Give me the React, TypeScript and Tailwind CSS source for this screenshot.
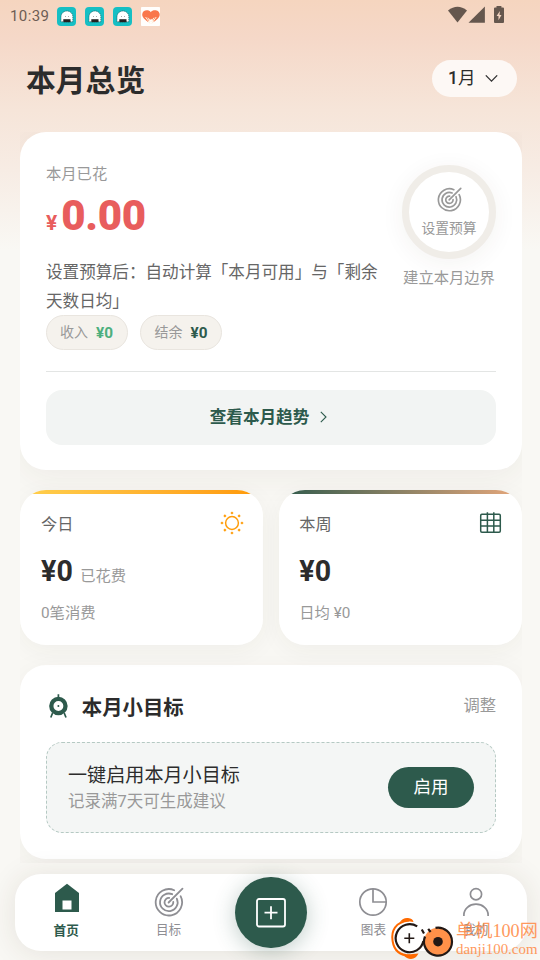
import React from "react";

function AppBadge() {
  return (
    <svg width="19" height="19" viewBox="0 0 19 19">
      <rect width="19" height="19" rx="4" fill="#16bfc4" />
      <path d="M4 14.8V9.6A5.9 5.6 0 0 1 15.8 9.6V14.8Z" fill="#fff" stroke="#1d3f44" strokeWidth="0.6" strokeDasharray="1.3 0.8" />
      <path d="M6.3 12.2H13.5V15.2H6.3Z" fill="#222" />
      <circle cx="8.4" cy="9.4" r="0.4" fill="#222" />
      <circle cx="11.4" cy="9.4" r="0.4" fill="#222" />
    </svg>
  );
}

function HeartBadge() {
  return (
    <svg width="19" height="19" viewBox="0 0 19 19">
      <rect width="19" height="19" rx="0.8" fill="#fffefc" />
      <path d="M9.8 5.3C7.8 2 1.2 2.8 1.2 7.6C1.2 10.7 4.5 13 7.2 15.2L8.8 11.4L9.8 13L11.1 11.4L12.6 15.2C15.5 13 18.7 10.7 18.7 7.6C18.7 2.8 11.8 2 9.8 5.3Z" fill="#f9774c" />
      <path d="M4.6 10L9 16.5M15.2 10L10.8 16.5M6.8 10.7L9.2 14.8M13 10.7L10.7 14.8" stroke="#fff0dc" strokeWidth="1" fill="none" />
    </svg>
  );
}

function Target({ size, color, width }: { size: number; color: string; width: number }) {
  return (
    <svg width={size} height={size} viewBox="0 0 30 30" fill="none" stroke={color} strokeWidth={width} strokeLinecap="round">
      <path d="M20.2 3.2A13.2 13.2 0 1 0 26.6 9.2" />
      <path d="M18.2 7.2A8.8 8.8 0 1 0 22.8 11.6" />
      <path d="M15.2 10.9A4.4 4.4 0 1 0 19.3 15" />
      <path d="M14.6 15.5L28.5 1.6" />
    </svg>
  );
}

function SunIcon() {
  const dots = ["12,2", "19.1,4.9", "22,12", "19.1,19.1", "12,22", "4.9,19.1", "2,12", "4.9,4.9"];
  return (
    <svg width="24" height="24" viewBox="0 0 24 24" fill="none">
      <circle cx="12" cy="12" r="6.4" stroke="#ff9d0a" strokeWidth="1.5" />
      {dots.map((d) => {
        const [x, y] = d.split(",").map(Number);
        return <path key={d} d={`M${x} ${y - 1.6}L${x + 1.6} ${y}L${x} ${y + 1.6}L${x - 1.6} ${y}Z`} fill="#ff9d0a" />;
      })}
    </svg>
  );
}

function SummaryCard({ title, bar, icon, unit, foot }: { title: string; bar: string; icon: React.ReactNode; unit?: string; foot: string }) {
  return (
    <section className="h-[155px] flex-1 rounded-[26px] shadow-[0_5px_24px_rgba(60,50,30,0.05)]">
      <div className="flex h-full flex-col overflow-hidden rounded-[26px] bg-white">
        <div className={`h-1 shrink-0 ${bar}`} />
        <div className={`flex flex-col pt-[17px] pr-[20.5px] ${unit ? "pl-[21px]" : "pl-[20.3px]"}`}>
          <div className="flex h-6 items-center justify-between">
            <span className="pt-[3px] text-[16.2px] leading-6 text-[#666]">{title}</span>
            <span className="-mr-[1px]">{icon}</span>
          </div>
          <div className="mt-[18px] flex h-9 items-baseline leading-9">
            <span className="text-[28.6px] font-bold tracking-[0.2px] text-[#2c2c2c]">¥0</span>
            {unit && <span className="ml-[7px] text-[15.3px] text-[#999]">{unit}</span>}
          </div>
          <div className="mt-[12px] text-[15.3px] leading-6 text-[#999]">{foot}</div>
        </div>
      </div>
    </section>
  );
}

function NavItem({ label, active, icon }: { label: string; active?: boolean; icon: React.ReactNode }) {
  return (
    <div className="flex flex-1 flex-col items-center">
      <div className={active ? "mt-[9px] ml-px h-[30px]" : "mt-[13px] h-[30px]"}>{icon}</div>
      <span className={active ? "mt-[9px] text-[12.6px] leading-[18px] font-bold text-[#2d5a4c]" : "mt-[4px] text-[12.6px] leading-[18px] text-[#8e8e93]"}>{label}</span>
    </div>
  );
}

export default function App() {
  return (
    <div
      className="relative flex h-[960px] w-[540px] flex-col overflow-hidden bg-[#f9f8f4] bg-[linear-gradient(180deg,#f5d5bf_0px,#f5d8c8_38px,#f6e5d9_110px,#f7ece4_170px,#f9f8f4_250px)]"
      style={{ fontFamily: 'Roboto, "Noto Sans CJK SC", sans-serif' }}
    >
      <div className="flex h-8 shrink-0 items-center justify-between pr-[36px] pl-[10px]">
        <div className="flex items-center">
          <span className="w-[47px] text-[15px] tracking-[0.4px] text-[#6d5d54]">10:39</span>
          <div className="flex gap-[9px]">
            <AppBadge />
            <AppBadge />
            <AppBadge />
            <HeartBadge />
          </div>
        </div>
        <svg width="56" height="18" viewBox="0 0 56 18" fill="#65574e" className="mt-[-2px]">
          <path d="M0 4.5Q9.5 -3 19 4.5L9.5 16.4Z" />
          <path d="M20.5 16.8L36.9 0.5V16.8Z" />
          <path d="M46 2.4Q46 1.4 47 1.4H48.5V0H53.4V1.4H55Q56 1.4 56 2.4V16Q56 17 55 17H47Q46 17 46 16Z" />
          <path d="M51.9 5L48.6 10.1H50.5V14.2L53.5 9H51.5Z" fill="#f5d5c2" />
        </svg>
      </div>

      <header className="flex h-[100px] shrink-0 items-start justify-between pr-[23px] pl-[26px]">
        <h1 className="mt-[27px] text-[29.8px] leading-[44px] font-bold text-[#2c2c2c]">本月总览</h1>
        <button className="mt-[28px] flex h-[37px] w-[85px] items-center rounded-full bg-[#fdf8f5] pl-[16px] text-[17.5px] text-[#2c2c2c]">
          <span className="-mt-px">
            <span className="font-medium">1</span>月
          </span>
          <svg width="13" height="8" viewBox="0 0 13 8" fill="none" stroke="#333" strokeWidth="1.3" className="ml-[9.5px]">
            <path d="M0.8 0.4L6.5 6.1L12.2 0.4" />
          </svg>
        </button>
      </header>

      <main className="mr-[18px] ml-[20px] h-[731px] shrink-0 overflow-hidden">
        <section className="h-[338px] rounded-[26px] bg-white px-[26px] shadow-[0_8px_32px_rgba(60,50,30,0.06)]">
          <div className="flex h-[240px] justify-between border-b border-[#e3e5e4] pt-[31px]">
            <div className="flex w-[336px] flex-col">
              <span className="text-[15.3px] leading-[22px] text-[#999]">本月已花</span>
              <div className="mt-[7px] flex h-[48px] items-baseline leading-[48px] text-[#e85d5d]">
                <span className="text-[21px] font-bold">¥</span>
                <span className="ml-[4px] text-[42px] font-black tracking-[-0.3px]">0.00</span>
              </div>
              <p className="mt-[18px] text-[16.58px] leading-[29px] text-[#666]">
                设置预算后：自动计算「本月可用」与「剩余
                <br />
                天数日均」
              </p>
              <div className="-mt-px flex gap-[12px]">
                <div className="flex h-[35px] w-[82px] items-center justify-center gap-[8px] rounded-full border border-[#e9e5df] bg-[#f5f2ed] pr-px">
                  <span className="text-[14px] text-[#999]">收入</span>
                  <span className="pt-px text-[15.3px] font-bold text-[#4caf7d]">¥0</span>
                </div>
                <div className="flex h-[35px] w-[82px] items-center justify-center gap-[8px] rounded-full border border-[#e9e5df] bg-[#f5f2ed]">
                  <span className="text-[14px] text-[#999]">结余</span>
                  <span className="pt-px text-[15.3px] font-bold text-[#2d5a4c]">¥0</span>
                </div>
              </div>
            </div>
            <div className="mt-[2px] flex w-[94px] flex-col items-center">
              <div className="flex h-[94px] w-[94px] flex-col items-center rounded-full border-[7px] border-[#f0ede8] bg-white pt-[15px] shadow-[0_4px_24px_rgba(60,50,30,0.06)]">
                <Target size={25} color="#999" width={2} />
                <span className="mt-[6px] text-[13.8px] leading-[20px] text-[#999]">设置预算</span>
              </div>
              <span className="mt-[8px] text-[15.3px] leading-[22px] whitespace-nowrap text-[#999]">建立本月边界</span>
            </div>
          </div>
          <button className="mt-[18px] flex h-[55px] w-full items-center justify-center gap-[11px] rounded-[16px] bg-[#f2f4f3] pr-[5px] text-[16.6px] font-bold text-[#2d5a4c]">
            <span className="pt-px">查看本月趋势</span>
            <svg width="7" height="12" viewBox="0 0 7 12" fill="none" stroke="#2d5a4c" strokeWidth="1.1" className="-mt-px">
              <path d="M0.8 0.8L6 6L0.8 11.2" />
            </svg>
          </button>
        </section>

        <div className="mt-[20px] flex gap-[16px]">
          <SummaryCard title="今日" bar="bg-linear-to-r from-[#ffd04d] to-[#ff9800]" icon={<SunIcon />} unit="已花费" foot="0笔消费" />
          <SummaryCard
            title="本周"
            bar="bg-linear-to-r from-[#2d5a4c] to-[#e8a87c]"
            icon={
              <svg width="24" height="24" viewBox="0 0 24 24" fill="none" stroke="#2d5a4c" strokeWidth="1.5">
                <rect x="1.7" y="3.3" width="19.6" height="18" rx="1.2" />
                <path d="M1.7 9.2H21.3M1.7 15H21.3M8.4 1.2V21.3M14.8 1.2V21.3" />
              </svg>
            }
            foot="日均 ¥0"
          />
        </div>

        <section className="mt-[20px] h-[194px] rounded-[26px] bg-white px-[26px] pt-[26px] shadow-[0_8px_32px_rgba(60,50,30,0.06)]">
          <div className="flex h-[30px] items-center">
            <svg width="25" height="25" viewBox="0 0 25 25" fill="none" stroke="#2d5a4c">
              <circle cx="12.4" cy="12" r="7.1" strokeWidth="4.3" />
              <circle cx="12.4" cy="12" r="1" fill="#2d5a4c" stroke="none" />
              <path d="M12.4 0.3V4M6.6 19L4.8 23.5M18.2 19L20 23.5" strokeWidth="1.7" />
            </svg>
            <h2 className="mt-[5px] ml-[10.8px] flex-1 text-[20.4px] font-bold text-[#2c2c2c]">本月小目标</h2>
            <span className="text-[16.3px] text-[#999]">调整</span>
          </div>
          <div className="mt-[21px] flex h-[91px] items-center justify-between rounded-[16px] border border-dashed border-[#b5c9c3] bg-[#f4f6f5] px-[21px]">
            <div className="pt-[2px]">
              <div className="text-[19.1px] leading-[26px] text-[#2c2c2c]">一键启用本月小目标</div>
              <div className="text-[16.5px] leading-[26px] text-[#999]">记录满7天可生成建议</div>
            </div>
            <button className="h-[41px] w-[86px] rounded-full bg-[#2d5a4c] text-[17.5px] text-white">启用</button>
          </div>
        </section>
      </main>

      <nav className="mt-[11px] mr-[13px] ml-[15px] flex h-[77px] shrink-0 rounded-[26px] bg-white shadow-[0_2px_30px_rgba(60,50,30,0.11)]">
        <NavItem
          label="首页"
          active
          icon={
            <svg width="26" height="30" viewBox="0 0 26 30">
              <path d="M13 0.8L25 10V29H1V10Z" fill="#2d5a4c" />
              <rect x="8.5" y="17.5" width="9" height="9" fill="#fff" />
            </svg>
          }
        />
        <NavItem label="目标" icon={<Target size={30} color="#8e8e93" width={1.8} />} />
        <div className="flex flex-1 justify-center pt-[3px]">
          <button className="flex h-[71px] w-[72px] items-center justify-center rounded-full bg-[#2d5a4c] shadow-[0_4px_22px_rgba(45,90,76,0.3)]">
            <svg width="30" height="30" viewBox="0 0 30 30" fill="none" stroke="#fff" strokeWidth="1.8">
              <rect x="1" y="1" width="28" height="27.5" rx="2" />
              <path d="M15 8.3V21.2M8.5 14.7H21.5" />
            </svg>
          </button>
        </div>
        <NavItem
          label="图表"
          icon={
            <svg width="30" height="30" viewBox="0 0 30 30" fill="none" stroke="#8e8e93" strokeWidth="1.7">
              <circle cx="15" cy="15" r="13.2" />
              <path d="M15 1.8V15H28.2" />
            </svg>
          }
        />
        <NavItem
          label="我的"
          icon={
            <svg width="30" height="30" viewBox="0 0 30 30" fill="none" stroke="#8e8e93" strokeWidth="1.7">
              <circle cx="15" cy="7.2" r="5.6" />
              <path d="M2.9 29V27.8A12.1 10.6 0 0 1 27.1 27.8V29" />
            </svg>
          }
        />
      </nav>

      <div className="absolute bottom-0 left-[390px] flex h-[44px] w-[150px] text-[#ff8f4d]">
        <svg width="66" height="44" viewBox="0 0 66 44" fill="none" className="shrink-0">
          <path d="M19 4.5C5 6 1 15 2.6 25C4 34 10 39.5 20 39.5" stroke="#ff6a00" strokeWidth="2" />
          <path d="M10 6Q13 1.5 18 2Q23 2.5 23.5 6Q17 4.5 10 6ZM13 39Q20 38 28.5 37.5Q26 42.5 21 43Q17 43 13 39Z" fill="#ff6a00" />
          <circle cx="19.7" cy="22.3" r="14" fill="#fff" />
          <path d="M27.2 10.4A14 14 0 1 0 33.4 25M31.8 13.5L34 17.5" stroke="#221815" strokeWidth="2.2" />
          <path d="M19.3 17.2V27.2M14.3 22.2H24.3" stroke="#221815" strokeWidth="1.6" />
          <circle cx="48" cy="25.7" r="14" fill="#ff9149" />
          <path d="M45.5 11.9A14 14 0 1 1 35 20.5M38.2 12.8L40.6 16" stroke="#221815" strokeWidth="2.2" />
          <circle cx="48" cy="25.7" r="4.8" fill="#221815" />
        </svg>
        <div className="flex flex-col whitespace-nowrap opacity-90" style={{ fontFamily: '"Liberation Serif", "Noto Sans CJK SC", serif' }}>
          <span className="mt-[2px] text-[18.2px] leading-[26px]">单机100网</span>
          <span className="-mt-[3px] text-[14.9px] leading-[16px]">danji100.com</span>
        </div>
      </div>
    </div>
  );
}
